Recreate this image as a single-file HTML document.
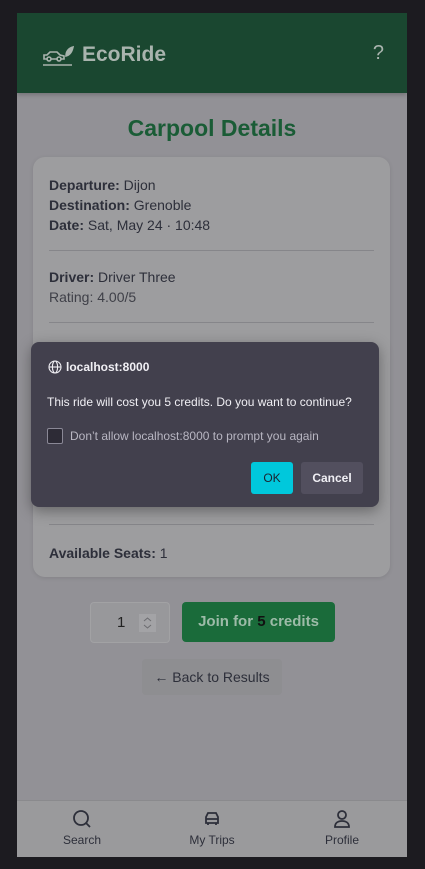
<!DOCTYPE html>
<html><head><meta charset="utf-8"><style>
*{box-sizing:border-box;margin:0;padding:0}
body{width:425px;height:869px;background:#1c1b20;font-family:"Liberation Sans",sans-serif;position:relative;overflow:hidden}
.app{position:absolute;left:17px;top:13px;width:390px;height:844px;background:#929196;overflow:hidden}
.hdr{height:80px;background:#1a4730;position:relative;box-shadow:0 2px 4px rgba(0,0,0,.2)}
.logo{position:absolute;left:25px;top:30px;display:flex;align-items:center;color:#a9b4ae;font-size:21px;font-weight:bold}
.q{position:absolute;right:23px;top:29px;color:#a9b4ae;font-size:20px}
h1{text-align:center;color:#1a5c36;font-size:23px;margin-top:22px;font-weight:bold}
.card{position:absolute;left:16px;top:144px;width:357px;height:420px;background:#9d9d9f;border-radius:12px;padding:18px 16px;color:#2d2f3a;font-size:14px;box-shadow:0 1px 4px rgba(0,0,0,.1)}
.card p{line-height:20px}
.hr{border-top:1px solid #86868a;margin:15px 0 16px}
.sub{color:#3f4048}
.seats{position:absolute;left:16px;top:386px}
.qty{position:absolute;left:73px;top:589px;width:80px;height:41px;border:1px solid #a2a2a4;border-radius:4px;background:#98989b}
.qty span{position:absolute;left:26px;top:11px;font-size:15px;color:#222}
.spin{position:absolute;left:48px;top:11px;width:17px;height:18px;background:#a3a3a6}
.join{position:absolute;left:165px;top:589px;width:153px;height:40px;background:#1a6b3a;border-radius:4px;color:#9dbba8;font-size:15px;font-weight:bold;text-align:center;line-height:40px}
.back{position:absolute;left:125px;top:646px;width:140px;height:36px;background:#8e8e91;border-radius:4px;color:#2d2f3a;font-size:14px;text-align:center;line-height:36px}
.nav{position:absolute;left:0;bottom:0;width:390px;height:57px;background:#9a9a9c;border-top:1px solid #8a8a8d;display:flex}
.nav div{flex:1;text-align:center;color:#2d2f3a;font-size:12px;padding-top:8px}
.nav svg{display:block;margin:0 auto 4px}
.dlg{position:absolute;left:31px;top:342px;width:348px;height:165px;background:#42404d;border-radius:8px;box-shadow:0 4px 14px rgba(0,0,0,.35);color:#f0eff4;font-size:12px}
.dt{position:absolute;left:17px;top:18px;font-weight:bold;display:flex;align-items:center;gap:4px}
.dm{position:absolute;left:16px;top:53px}
.cb{position:absolute;left:16px;top:86px;width:16px;height:16px;border:1px solid #8a8896;border-radius:2px;background:#2d2b36}
.cl{position:absolute;left:39px;top:87px;color:#b8b6c2}
.ok{position:absolute;left:220px;top:120px;width:42px;height:32px;background:#00c8dc;border-radius:3px;color:#1b2330;text-align:center;line-height:32px}
.cn{position:absolute;left:270px;top:120px;width:62px;height:32px;background:#524f5e;border-radius:3px;text-align:center;line-height:32px;font-weight:bold}
</style></head><body>
<div class="app">
<div class="hdr">
<div class="logo"><svg width="32" height="22" viewBox="0 0 32 22" fill="none" stroke="#a9b4ae" stroke-width="1.6"><path d="M2 15h20v-3l-4-1-3-3H8L5 11H2z"/><circle cx="7" cy="15" r="2" fill="#1a4730"/><circle cx="17" cy="15" r="2" fill="#1a4730"/><path d="M1 21h29"/><path d="M24 12c0-5 3-8 7-9-1 5-3 8-7 9z" fill="#a9b4ae"/></svg><span style="margin-left:8px">EcoRide</span></div>
<div class="q">?</div>
</div>
<h1>Carpool Details</h1>
<div class="card">
<p><b>Departure:</b> Dijon</p>
<p><b>Destination:</b> Grenoble</p>
<p><b>Date:</b> Sat, May 24 · 10:48</p>
<div class="hr"></div>
<p><b>Driver:</b> Driver Three</p>
<p class="sub">Rating: 4.00/5</p>
<div class="hr"></div>
<div class="hr" style="position:absolute;left:16px;right:16px;top:367px;margin:0"></div>
<p class="seats"><b>Available Seats:</b> 1</p>
</div>
<div class="qty"><span>1</span><div class="spin"><svg width="17" height="18" viewBox="0 0 17 18" fill="none" stroke="#6c6c70" stroke-width="1"><path d="M5 7l3.5-3 3.5 3M5 11l3.5 3 3.5-3"/></svg></div></div>
<div class="join">Join for <span style="color:#111">5</span> credits</div>
<div class="back">← Back to Results</div>
<div class="nav">
<div><svg width="20" height="20" viewBox="0 0 20 20" fill="none" stroke="#2d2f3a" stroke-width="1.8"><circle cx="9" cy="9" r="7"/><path d="M14 14l4 4"/></svg>Search</div>
<div><svg width="20" height="20" viewBox="0 0 20 20" fill="none" stroke="#2d2f3a" stroke-width="1.8"><path d="M4 8l2-4h8l2 4v6H4z"/><path d="M4 10h12M6 14v2M14 14v2"/></svg>My Trips</div>
<div><svg width="20" height="20" viewBox="0 0 20 20" fill="none" stroke="#2d2f3a" stroke-width="1.8"><circle cx="10" cy="6" r="4"/><path d="M3 18c0-4 3-6 7-6s7 2 7 6z"/></svg>Profile</div>
</div>
</div>
<div class="dlg">
<div class="dt"><svg width="14" height="14" viewBox="0 0 14 14" fill="none" stroke="#f0eff4" stroke-width="1.1"><circle cx="7" cy="7" r="6"/><ellipse cx="7" cy="7" rx="2.6" ry="6"/><path d="M1 7h12"/></svg>localhost:8000</div>
<div class="dm">This ride will cost you 5 credits. Do you want to continue?</div>
<div class="cb"></div><div class="cl">Don’t allow localhost:8000 to prompt you again</div>
<div class="ok">OK</div><div class="cn">Cancel</div>
</div>
</body></html>
